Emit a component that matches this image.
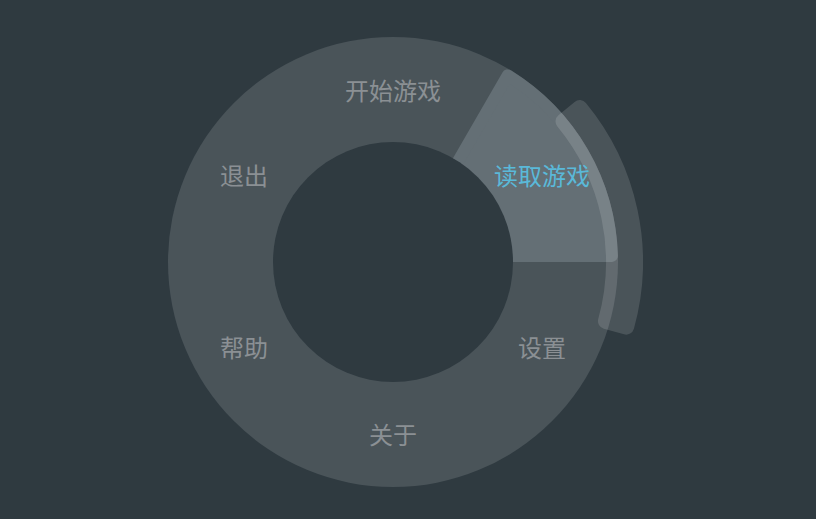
const items = [
  { label: '开始游戏', pos: 'left-[225px] top-[54px]' },
  { label: '读取游戏', pos: 'left-[374px] top-[139px]', active: true },
  { label: '设置', pos: 'left-[374px] top-[311px]' },
  { label: '关于', pos: 'left-[225px] top-[398px]' },
  { label: '帮助', pos: 'left-[76px] top-[311px]' },
  { label: '退出', pos: 'left-[76px] top-[139px]' },
];

const RingMenu = () => {
  return (
    <div className="relative w-[450px] h-[450px] ml-[168px] mt-[37px]">
      <svg className="absolute inset-0 overflow-visible" width="450" height="450" viewBox="0 0 450 450">
        {/* ring */}
        <circle cx="225" cy="225" r="225" fill="#4a5459" />
        {/* active slice */}
        <path
          d="M 235.39 219 L 339.66 38.41 A 219 219 0 0 1 443.92 219 Z"
          fill="#646f75"
          stroke="#646f75"
          strokeWidth="12"
          strokeLinejoin="round"
        />
        {/* hole */}
        <circle cx="225" cy="225" r="120" fill="#2f3a40" />
        {/* outer indicator */}
        <g opacity="0.13">
          <path
            d="M 411.73 71.06 A 242 242 0 0 1 458.19 289.66 L 437.96 284.05 A 221 221 0 0 0 395.52 84.42 Z"
            fill="#ffffff"
            stroke="#ffffff"
            strokeWidth="16"
            strokeLinejoin="round"
          />
        </g>
      </svg>

      {items.map((item) => (
        <span
          key={item.label}
          className={`absolute ${item.pos} -translate-x-1/2 -translate-y-1/2 whitespace-nowrap text-[24px] leading-none ${
            item.active ? 'text-[#5ab9d9]' : 'text-[#8b9094]'
          }`}
        >
          {item.label}
        </span>
      ))}
    </div>
  );
};

export default function App() {
  return (
    <div
      className="w-full h-screen bg-[#2f3a40] overflow-hidden"
      style={{ fontFamily: '"Noto Sans", "Noto Sans CJK SC", sans-serif' }}
    >
      <RingMenu />
    </div>
  );
}
